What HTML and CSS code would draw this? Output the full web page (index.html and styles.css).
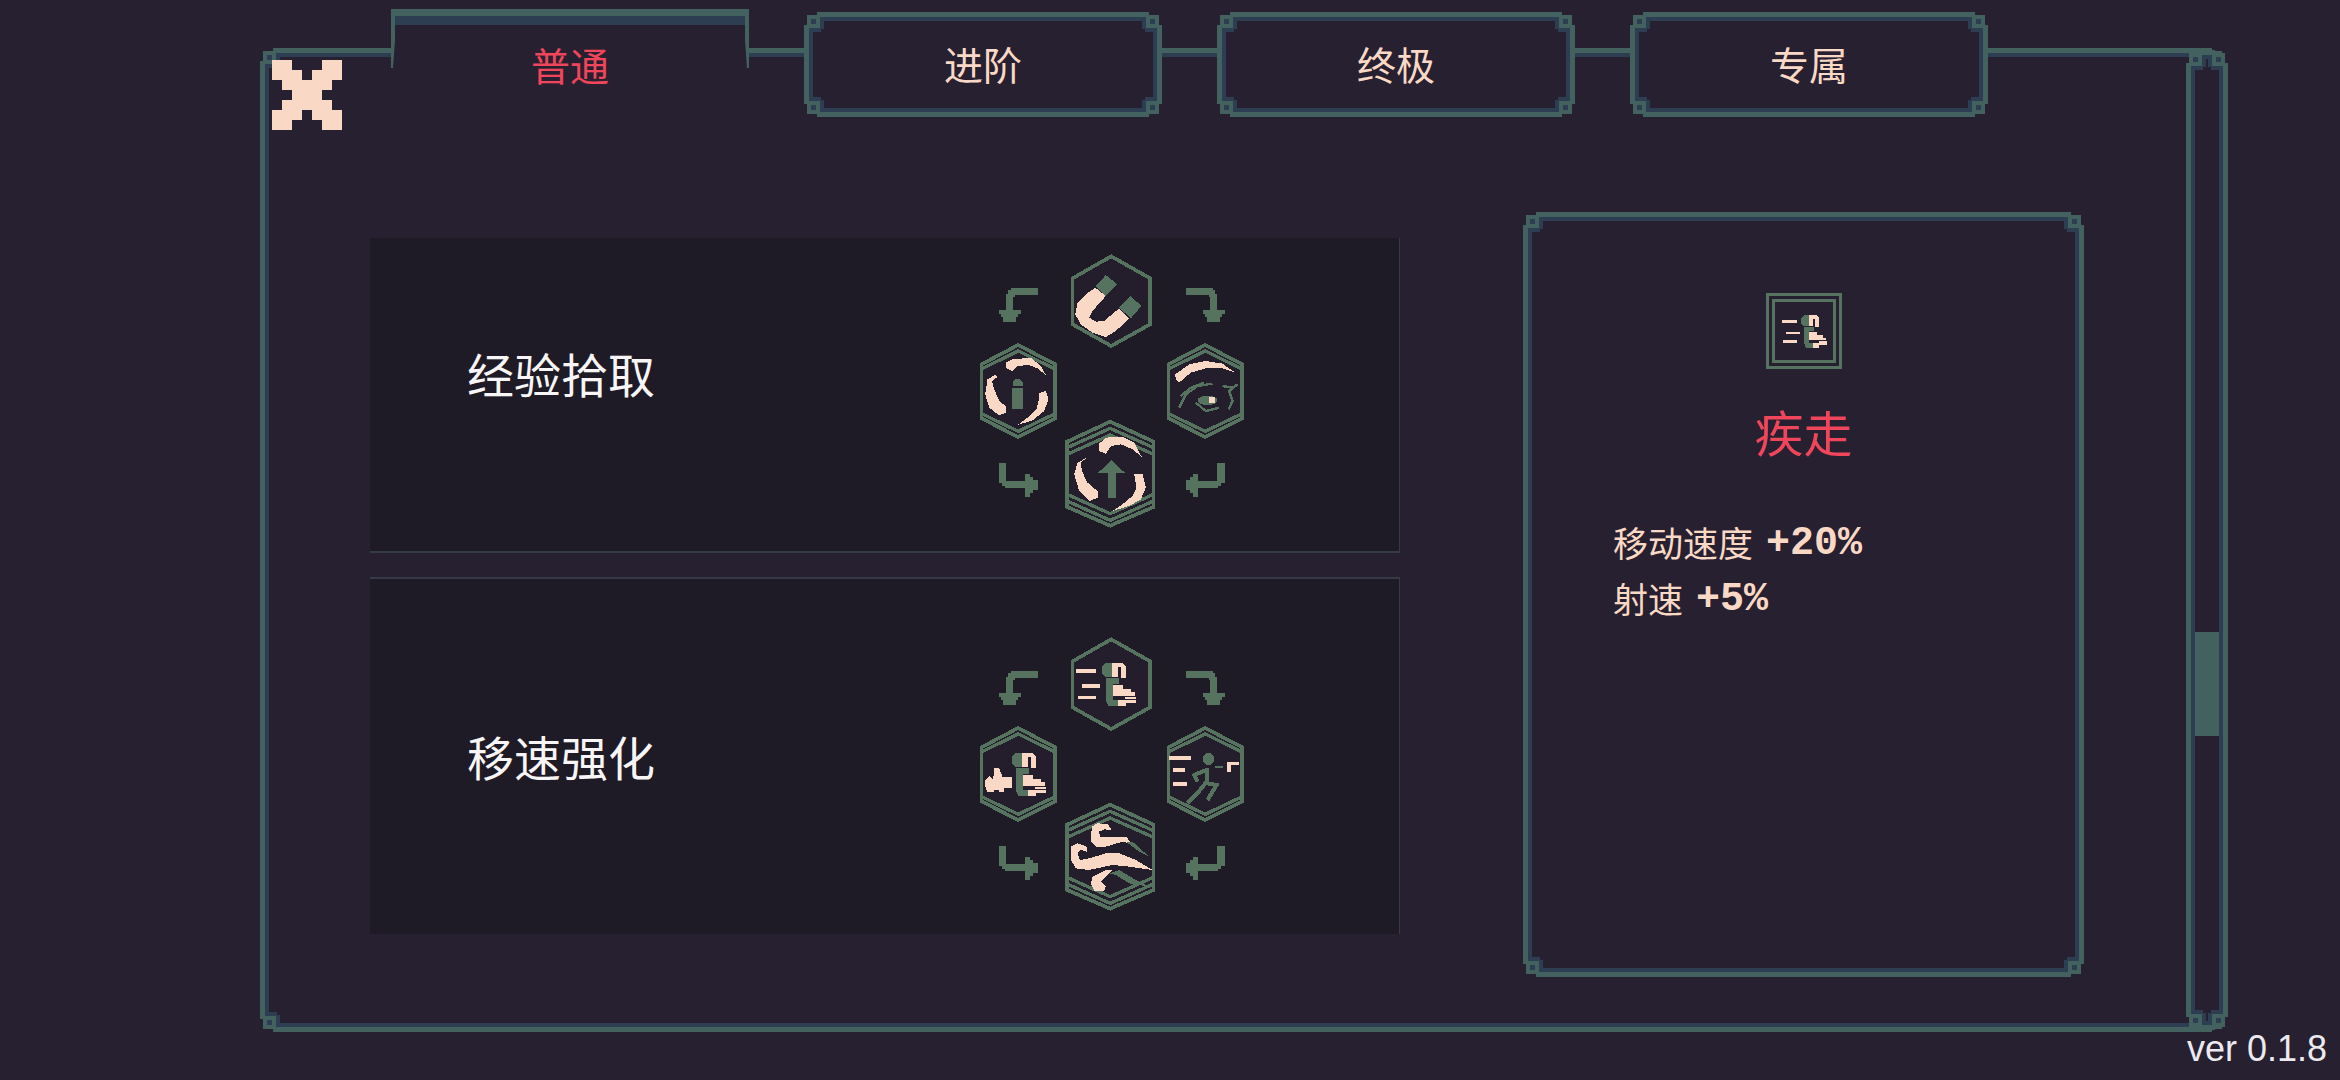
FILE: index.html
```html
<!DOCTYPE html>
<html>
  <head>
    <meta charset="utf-8" />
    <title>天赋</title>
    <link rel="stylesheet" href="styles.css">
  </head>
  <body>
    <svg class="sprite" xmlns="http://www.w3.org/2000/svg">
      <symbol id="hex-1" viewBox="0 0 990 960">
        <polygon class="hex" points="486,76 603,142 603,280 486,345 370,280 370,142" />
      </symbol>
      <symbol id="hex-2" viewBox="0 0 990 960">
        <polygon class="hex" points="207,342 318,400 318,562 207,618 97,562 97,400" />
        <polyline class="hex-line" points="97,414 207,360 318,414" />
        <polyline class="hex-line" points="97,548 207,601 318,548" />
      </symbol>
      <symbol id="arrow-down" viewBox="0 0 990 960">
        <path class="arrow" d="M265 170V192H196V198H192V238H214V250H206V258H200V272H162V258H156V250H148V238H170V188H176V178H184V170Z" />
      </symbol>
      <symbol id="arrow-side" viewBox="0 0 990 960">
        <path class="arrow" d="M148 695H170V750H228V730H242V738H252V748H265V778H252V787H242V797H228V772H168V764H158V756H148Z" />
      </symbol>
      <g id="tree-base">
        <use href="#hex-1" width="990" height="960" />
        <use href="#hex-2" width="990" height="960" />
        <use href="#hex-2" width="990" height="960" transform="translate(561 0)" />
        <polygon class="hex" points="483,572 613,632 613,828 483,884 354,828 354,632" />
        <polyline class="hex-line" points="354,650 483,592 613,650" />
        <polyline class="hex-line" points="354,670 483,612 613,670" />
        <polyline class="hex-line" points="354,790 483,848 613,790" />
        <polyline class="hex-line" points="354,810 483,868 613,810" />
        <use href="#arrow-down" width="990" height="960" />
        <use href="#arrow-down" width="990" height="960" transform="matrix(-1 0 0 1 975 0)" />
        <use href="#arrow-side" width="990" height="960" />
        <use href="#arrow-side" width="990" height="960" transform="matrix(-1 0 0 1 975 0)" />
      </g>
      <g id="boot">
        <path class="ink-green" d="M458 140L470 128H488V172H470L458 160ZM470 175H510V192H490V240H505V258H478L470 240Z" />
        <path class="ink-cream" d="M488 128H520L530 138V175H515V142H505V172H488ZM490 195H522V207H545V217H558V228H490ZM505 240H560V248H530V258H505ZM528 232H560V238H528Z" />
      </g>
    </svg>

    <div class="window frame">
      <div class="window-body">
        <div class="topbar">
          <svg class="close" viewBox="0 0 7 7" shape-rendering="crispEdges">
            <path d="M0 0H2V1H3V2H4V1H5V0H7V2H6V3H5V4H6V5H7V7H5V6H4V5H3V6H2V7H0V5H1V4H2V3H1V2H0Z" />
          </svg>
          <div class="tabs">
            <div class="tab active">普通</div>
            <div class="tab frame">进阶</div>
            <div class="tab frame">终极</div>
            <div class="tab frame">专属</div>
          </div>
        </div>

        <div class="content">
          <div class="list">
            <div class="row row-first">
              <div class="row-name">经验拾取</div>
              <svg class="tree" viewBox="90 60 800 840" shape-rendering="crispEdges">
                <use href="#tree-base" />
                <polygon class="ink-green" points="470,132 505,160 470,195 440,165" />
                <polygon class="ink-green" points="543,195 577,225 545,262 510,230" />
                <polygon class="ink-cream" points="438,170 470,195 430,240 420,260 440,272 465,270 510,232 540,262 500,300 470,318 430,305 395,280 378,250 385,215 410,190" />
                <path class="ink-cream" d="M170 395L190 385L245 380L275 405L290 432L265 412L240 402L205 405L190 420L172 412ZM138 432L115 445L108 490L120 530L150 553L172 545L170 525L150 510L135 475L128 450L145 438ZM268 487L290 480L298 505L285 540L250 568L205 582L235 560L262 535L268 510Z" />
                <path class="ink-green" d="M190 455L198 445H212L222 455V465H190ZM188 470H222V535H188Z" />
                <path class="ink-cream" d="M678 430L720 400L770 390L820 398L858 425L820 412L770 412L725 425L690 455L680 445Z" />
                <path class="thin-green" d="M690 530L710 490L745 465L790 458M695 495L725 470L765 455M865 460L840 480L850 510L838 535M740 515L770 540L810 530M820 465L850 470" />
                <ellipse class="ink-green" cx="775" cy="508" rx="30" ry="14" />
                <rect class="ink-cream" x="778" y="498" width="20" height="19" />
                <path class="ink-cream" d="M448 640L470 620L520 617L555 635L578 678L550 655L515 640L485 645L470 668L450 660ZM413 680L385 695L375 730L390 780L420 810L448 800L445 780L415 755L398 720L395 695ZM555 730L580 730L590 770L575 805L540 825L490 840L520 820L550 795L562 770Z" />
                <polygon class="ink-green" points="487,688 527,725 500,725 500,800 475,800 475,725 447,725" />
              </svg>
            </div>
            <div class="row row-last">
              <div class="row-name">移速强化</div>
              <svg class="tree" viewBox="90 60 800 840" shape-rendering="crispEdges">
                <use href="#tree-base" />
                <g transform="translate(0 18)">
                  <path class="ink-cream" d="M380 148H440V158H380ZM397 193H452V203H397ZM385 228H440V238H385Z" />
                  <use href="#boot" />
                  <use href="#boot" transform="translate(-270 270)" />
                  <path class="ink-cream" d="M108 480L120 468L132 478L135 445H150L160 470H188V505H165V517H150V510H135V517H115L108 500Z" />
                  <path class="ink-cream" d="M660 407H725V419H660ZM672 445H707V455H672ZM672 487H714V497H672ZM833 425H870V435H845V455H833Z" />
                  <circle class="ink-green" cx="778" cy="417" r="18" />
                  <path class="ink-green" d="M797 437H822V443H797Z" />
                  <path class="limb-green" d="M772 445V485L745 520L715 550M772 450L735 465L745 485M775 490L802 495L775 540" />
                  <path class="ink-cream" d="M428 620L445 610L475 612L488 630L465 628L450 635L452 650H530L550 672L520 665L470 680H440L425 665ZM365 680L385 670L413 680V695L395 690L385 700L392 720L420 715L470 700H510L560 720L610 750L540 740L490 735L420 750L380 745L365 720ZM430 770L470 750H490L470 770L455 785L470 800L465 812H435L425 790Z" />
                  <path class="ink-green" d="M530 665H550L600 710L570 695ZM480 760L510 750L560 780L600 800L540 790L500 765Z" />
                </g>
              </svg>
            </div>
          </div>

          <div class="detail frame">
            <div class="detail-icon">
              <svg viewBox="370 120 200 146" shape-rendering="crispEdges">
                <path class="ink-cream" d="M380 148H440V158H380ZM397 193H452V203H397ZM385 228H440V238H385Z" />
                <use href="#boot" />
              </svg>
            </div>
            <div class="detail-title">疾走</div>
            <div class="stats">
              <p class="stat">移动速度<span class="stat-num">+20%</span></p>
              <p class="stat">射速<span class="stat-num">+5%</span></p>
            </div>
          </div>
        </div>
      </div>

      <div class="scroll frame">
        <div class="scroll-thumb"></div>
      </div>
    </div>

    <div class="version">ver 0.1.8</div>
  </body>
</html>
```

FILE: styles.css
```css
html,
body {
  margin: 0;
  height: 100%;
  overflow: hidden;
}

body {
  background: #272030;
  color: #f9d9c5;
  font-family: "Noto Sans CJK SC", "Liberation Sans", sans-serif;
}

.sprite {
  display: none;
}

/* pixel frame: teal outside, navy inside, little knobs on the corners */
.frame {
  box-sizing: border-box;
  border: 20px solid transparent;
  border-image: url("data:image/svg+xml,<svg xmlns='http://www.w3.org/2000/svg' width='49' height='49' shape-rendering='crispEdges'><rect x='9' y='9' width='31' height='31' fill='%23272030'/><g fill='%232d3e52'><rect x='5' y='14' width='4' height='21'/><rect x='40' y='14' width='4' height='21'/><rect x='14' y='5' width='21' height='4'/><rect x='14' y='40' width='21' height='4'/><rect x='9' y='16' width='8' height='4'/><rect x='16' y='9' width='4' height='8'/><rect x='32' y='16' width='8' height='4'/><rect x='29' y='9' width='4' height='8'/><rect x='9' y='29' width='8' height='4'/><rect x='16' y='32' width='4' height='8'/><rect x='32' y='29' width='8' height='4'/><rect x='29' y='32' width='4' height='8'/></g><g fill='%2343625f'><rect x='0' y='13' width='5' height='23'/><rect x='44' y='13' width='5' height='23'/><rect x='13' y='0' width='23' height='5'/><rect x='13' y='44' width='23' height='5'/><rect x='3' y='3' width='13' height='13'/><rect x='33' y='3' width='13' height='13'/><rect x='3' y='33' width='13' height='13'/><rect x='33' y='33' width='13' height='13'/></g><g fill='%232d3e52'><rect x='7' y='7' width='5' height='5'/><rect x='37' y='7' width='5' height='5'/><rect x='7' y='37' width='5' height='5'/><rect x='37' y='37' width='5' height='5'/></g></svg>") 20 fill / 20px;
}

.window {
  display: flex;
  width: 1965px;
  height: 984px;
  margin: 48px 0 0 260px;
}

.window-body {
  flex: 1;
  min-width: 0;
}

.topbar {
  display: flex;
  align-items: flex-start;
  height: 104px;
  margin: -56px 0 0 -8px;
}

.close {
  flex: none;
  width: 70px;
  height: 70px;
  margin-top: 48px;
  fill: #f9d9c5;
}

.tabs {
  display: flex;
  gap: 55px;
  margin-left: 49px;
}

.tab {
  display: flex;
  align-items: center;
  justify-content: center;
  width: 358px;
  height: 105px;
  padding-bottom: 3px;
  font-size: 39px;
}

.tab.active {
  position: relative;
  box-sizing: border-box;
  height: 107px;
  margin-top: -3px;
  padding-bottom: 5px;
  border-top: 7px solid #43625f;
  background: linear-gradient(#2d3e52, #2d3e52) top / 100% 9px no-repeat, #272030;
  color: #f0455a;
}

.tab.active::before,
.tab.active::after {
  content: "";
  position: absolute;
  top: -4px;
  width: 4px;
  height: 56px;
  background: #43625f;
  clip-path: polygon(0 0, 100% 0, 100% 50%, 50% 100%, 0 100%);
}

.tab.active::before {
  left: 0;
}

.tab.active::after {
  right: 0;
  transform: scaleX(-1);
}

.content {
  display: flex;
  align-items: flex-start;
  margin-top: 96px;
  padding-left: 90px;
}

.list {
  display: flex;
  flex-direction: column;
  gap: 24px;
  width: 1030px;
  margin-top: 26px;
}

.row {
  box-sizing: border-box;
  display: flex;
  align-items: flex-end;
  justify-content: space-between;
  padding: 0 153px 20px 97px;
  background: #1e1a26;
  border-right: 1px solid #343a46;
}

.row-first {
  height: 315px;
  border-bottom: 2px solid #343a46;
}

.row-last {
  height: 357px;
  border-top: 2px solid #343a46;
}

.row-name {
  margin-bottom: 128px;
  color: #f7f5f5;
  font-size: 47px;
  line-height: 60px;
}

.tree {
  flex: none;
  width: 267px;
  height: 280px;
}

.hex {
  fill: #241e2c;
  stroke: #55735f;
  stroke-width: 11;
}

.hex-line {
  fill: none;
  stroke: #55735f;
  stroke-width: 10;
}

.arrow,
.ink-green {
  fill: #55735f;
}

.ink-cream {
  fill: #f9d9c5;
}

.thin-green {
  fill: none;
  stroke: #55735f;
  stroke-width: 7;
}

.limb-green {
  fill: none;
  stroke: #55735f;
  stroke-width: 12;
}

.detail {
  display: flex;
  flex-direction: column;
  align-items: center;
  flex: none;
  width: 561px;
  height: 765px;
  margin-left: 123px;
  padding-top: 61px;
}

.detail-icon {
  box-sizing: border-box;
  display: flex;
  align-items: center;
  justify-content: center;
  width: 76px;
  height: 76px;
  padding: 4px;
  border: 3px solid #55735f;
  outline: 3px solid #55735f;
  outline-offset: -9px;
}

.detail-icon svg {
  width: 50px;
  height: 37px;
}

.detail-title {
  margin-top: 32px;
  color: #f0455a;
  font-size: 49px;
  line-height: 60px;
}

.stats {
  align-self: stretch;
  margin-top: 53px;
  padding-left: 70px;
  font-size: 35px;
  line-height: 56px;
}

.stat {
  display: flex;
  align-items: center;
  gap: 13px;
  height: 56px;
  margin: 0;
}

.stat-num {
  padding-top: 3px;
  font-family: "Liberation Mono", monospace;
  font-size: 40px;
  font-weight: 700;
}

.scroll {
  flex: none;
  position: relative;
  width: 42px;
  height: 980px;
  margin: -18px -23px 0 0;
}

.scroll-thumb {
  position: absolute;
  top: 562px;
  left: -11px;
  width: 24px;
  height: 104px;
  background: #43625f;
}

.version {
  padding-right: 13px;
  color: #eceaee;
  font-family: "Liberation Sans", sans-serif;
  font-size: 36px;
  line-height: 34px;
  text-align: right;
}
```
